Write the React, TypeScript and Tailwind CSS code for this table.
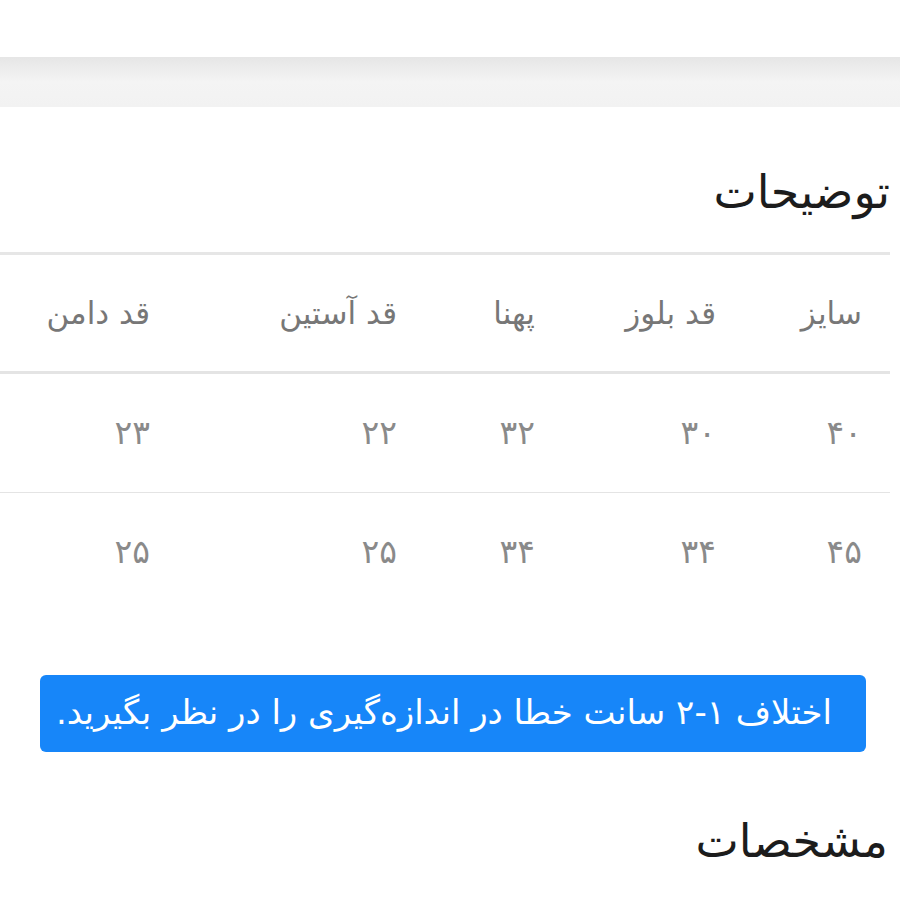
import React from "react";

type Row = string[];

const headers: Row = ["سایز", "قد بلوز", "پهنا", "قد آستین", "قد دامن"];
const rows: Row[] = [
  ["۴۰", "۳۰", "۳۲", "۲۲", "۲۳"],
  ["۴۵", "۳۴", "۳۴", "۲۵", "۲۵"],
];

// column widths, right to left
const colClass = [
  "w-[146px] shrink-0",
  "w-[181px] shrink-0",
  "w-[138px] shrink-0",
  "w-[247px] shrink-0",
  "flex-1",
];

const TableRow = ({ cells, head }: { cells: Row; head?: boolean }) => (
  <div
    className={
      head
        ? "flex flex-row h-[119px] items-center border-b-[3px] border-[#e4e4e4]"
        : "flex flex-row h-[118px] items-center"
    }
  >
    {cells.map((c, i) => (
      <div
        key={i}
        className={`${colClass[i]} pr-[28px] text-right whitespace-nowrap ${
          head ? "text-[31px] text-[#777777]" : "text-[33px] text-[#8a8a8a]"
        }`}
      >
        {c}
      </div>
    ))}
  </div>
);

export default function App() {
  return (
    <div
      dir="rtl"
      className="w-[900px] h-[900px] bg-white overflow-hidden"
      style={{ fontFamily: '"DejaVu Sans", sans-serif' }}
    >
      <div className="h-[57px] bg-white" />
      <div className="h-[50px] bg-gradient-to-b from-[#e6e6e6] via-[#f4f4f4] to-[#f2f2f2]" />

      <div className="pr-[10px]">
        <h2 className="pt-[58px] h-[145px] text-[46px] leading-[54px] text-[#1c1c1c] font-normal">
          توضیحات
        </h2>

        <div className="border-t-[3px] border-[#e6e6e6]">
          <TableRow cells={headers} head />
          <div className="border-b border-[#e4e4e4]">
            <TableRow cells={rows[0]} />
          </div>
          <TableRow cells={rows[1]} />
        </div>
      </div>

      <div className="mt-[64px] mr-[34px] ml-[40px] h-[77px] rounded-md bg-[#1786f9] flex items-center pr-[34px] pb-[3px] text-[34px] text-white whitespace-nowrap">
        اختلاف ۱-۲ سانت خطا در اندازه‌گیری را در نظر بگیرید.
      </div>

      <h2 className="mt-[62px] pr-[12px] text-[46px] leading-[54px] text-[#1c1c1c] font-normal">
        مشخصات
      </h2>
    </div>
  );
}
